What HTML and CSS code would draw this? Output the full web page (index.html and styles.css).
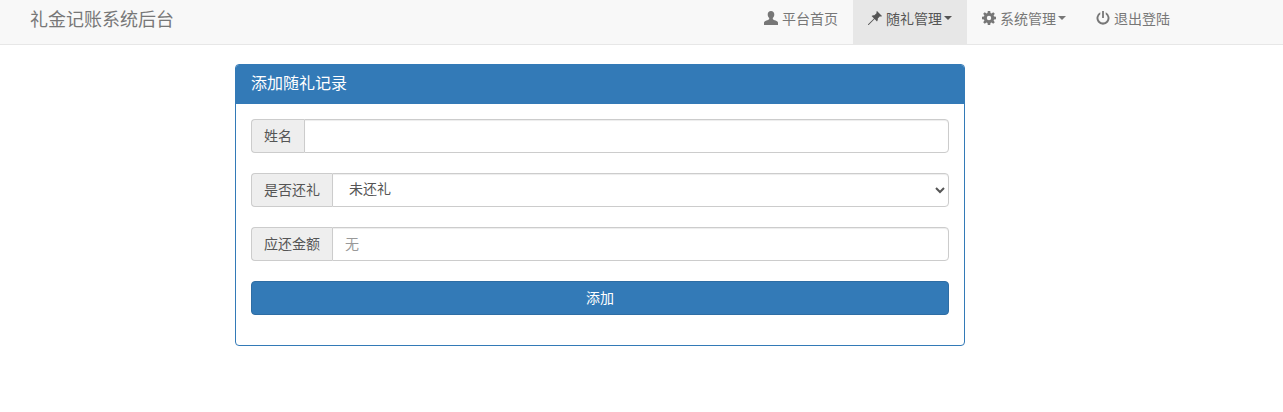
FILE: index.html
```html
<!DOCTYPE html>
<html lang="zh-CN">
<head>
    <meta charset="UTF-8">
    <title>礼金记账系统后台</title>
    <link rel="stylesheet" href="styles.css">
</head>
<body>
    <nav class="navbar">
        <a class="navbar-brand" href="#">礼金记账系统后台</a>
        <ul class="navbar-nav">
            <li><a href="#">
                <svg class="icon" viewBox="0 0 14 14"><path d="M0 14v-2.200c0-1.200 1-1.900 2.400-2.400 1.500-.5 2.600-.9 2.800-1.500v-.9C4.300 6.200 3.700 5 3.700 3.500 3.700 1.300 5 0 7 0s3.300 1.300 3.300 3.500c0 1.500-.6 2.700-1.500 3.500v.9c.2.600 1.300 1 2.800 1.500 1.400.5 2.400 1.200 2.400 2.400V14z"/></svg>
                平台首页</a></li>
            <li class="active"><a href="#">
                <svg class="icon" viewBox="0 0 14 14"><path d="M9 0l5 5-1 .7-1-.4-2.200 2.300c.2 1.200-.1 2.100-.8 2.800L6.600 8 .7 13.900 0 14l.1-.7L6 7.400 3.600 5c.7-.7 1.600-1 2.800-.8L8.700 2l-.4-1z"/></svg>
                随礼管理<span class="caret"></span></a></li>
            <li><a href="#">
                <svg class="icon" viewBox="0 0 14 14"><path fill-rule="evenodd" d="M5.800 0h2.400l.3 1.900 1.100.5L11.200 1.200l1.600 1.600-1.200 1.600.5 1.100 1.900.3v2.400l-1.900.3-.5 1.100 1.200 1.600-1.600 1.600-1.600-1.200-1.100.5-.3 1.900H5.800l-.3-1.900-1.100-.5-1.600 1.200-1.600-1.600 1.200-1.600-.5-1.100L0 8.200V5.800l1.900-.3.5-1.100L1.200 2.800l1.600-1.600 1.600 1.200 1.100-.5zM7 4.800a2.200 2.200 0 1 0 0 4.400 2.200 2.200 0 0 0 0-4.400z"/></svg>
                系统管理<span class="caret"></span></a></li>
            <li><a href="#">
                <svg class="icon" viewBox="0 0 14 14"><path d="M6.100 0h1.800v7H6.100z"/><path d="M9.700 1.300v2a4.600 4.600 0 1 1-5.400 0v-2a6.500 6.500 0 1 0 5.400 0z"/></svg>
                退出登陆</a></li>
        </ul>
    </nav>

    <div class="panel">
        <div class="panel-heading">添加随礼记录</div>
        <form class="panel-body">
            <div class="input-group">
                <span class="input-group-addon">姓名</span>
                <input class="form-control" type="text">
            </div>
            <div class="input-group">
                <span class="input-group-addon">是否还礼</span>
                <select class="form-control">
                    <option>未还礼</option>
                    <option>已还礼</option>
                </select>
            </div>
            <div class="input-group">
                <span class="input-group-addon">应还金额</span>
                <input class="form-control" type="text" placeholder="无">
            </div>
            <button class="btn-primary" type="button">添加</button>
        </form>
    </div>
</body>
</html>
```

FILE: styles.css
```css
* {
    box-sizing: border-box;
}

body {
    margin: 0;
    font-family: "Noto Sans CJK SC", "Liberation Sans", sans-serif;
    font-size: 14px;
    line-height: 20px;
    color: #333;
    background: #fff;
}

a {
    text-decoration: none;
}

.navbar {
    display: flex;
    justify-content: space-between;
    height: 45px;
    padding: 0 98px 0 30px;
    background: #f8f8f8;
    border-bottom: 1px solid #e7e7e7;
}

.navbar-brand {
    font-size: 18px;
    line-height: 36px;
    color: #777;
}

.navbar-nav {
    display: flex;
    margin: 0;
    padding: 0;
    list-style: none;
}

.navbar-nav a {
    display: flex;
    align-items: center;
    height: 44px;
    padding: 0 15px 8px;
    color: #777;
}

.navbar-nav .active a {
    color: #555;
    background: #e7e7e7;
}

.icon {
    width: 14px;
    height: 14px;
    margin-right: 4px;
    fill: currentColor;
}

.caret {
    width: 0;
    height: 0;
    margin-left: 2px;
    border-top: 4px solid;
    border-left: 4px solid transparent;
    border-right: 4px solid transparent;
}

.panel {
    width: 730px;
    margin: 19px 0 0 235px;
    border: 1px solid #337ab7;
    border-radius: 4px;
}

.panel-heading {
    height: 39px;
    padding: 7px 15px;
    font-size: 16px;
    color: #fff;
    background: #337ab7;
    border-radius: 3px 3px 0 0;
}

.panel-body {
    display: flex;
    flex-direction: column;
    gap: 20px;
    padding: 15px 15px 30px;
}

.input-group {
    display: flex;
    height: 34px;
}

.input-group-addon {
    padding: 5px 12px 7px;
    color: #555;
    white-space: nowrap;
    background: #eee;
    border: 1px solid #ccc;
    border-right: 0;
    border-radius: 4px 0 0 4px;
}

.form-control {
    flex: 1;
    min-width: 0;
    padding: 5px 12px 7px;
    font: inherit;
    color: #555;
    background: #fff;
    border: 1px solid #ccc;
    border-radius: 0 4px 4px 0;
    box-shadow: inset 0 1px 1px rgba(0, 0, 0, 0.075);
}

select.form-control {
    padding: 3px 12px 7px;
}

.form-control::placeholder {
    color: #999;
}

.btn-primary {
    height: 34px;
    padding: 0 0 2px;
    font: inherit;
    color: #fff;
    background: #337ab7;
    border: 1px solid #2e6da4;
    border-radius: 4px;
}
```
